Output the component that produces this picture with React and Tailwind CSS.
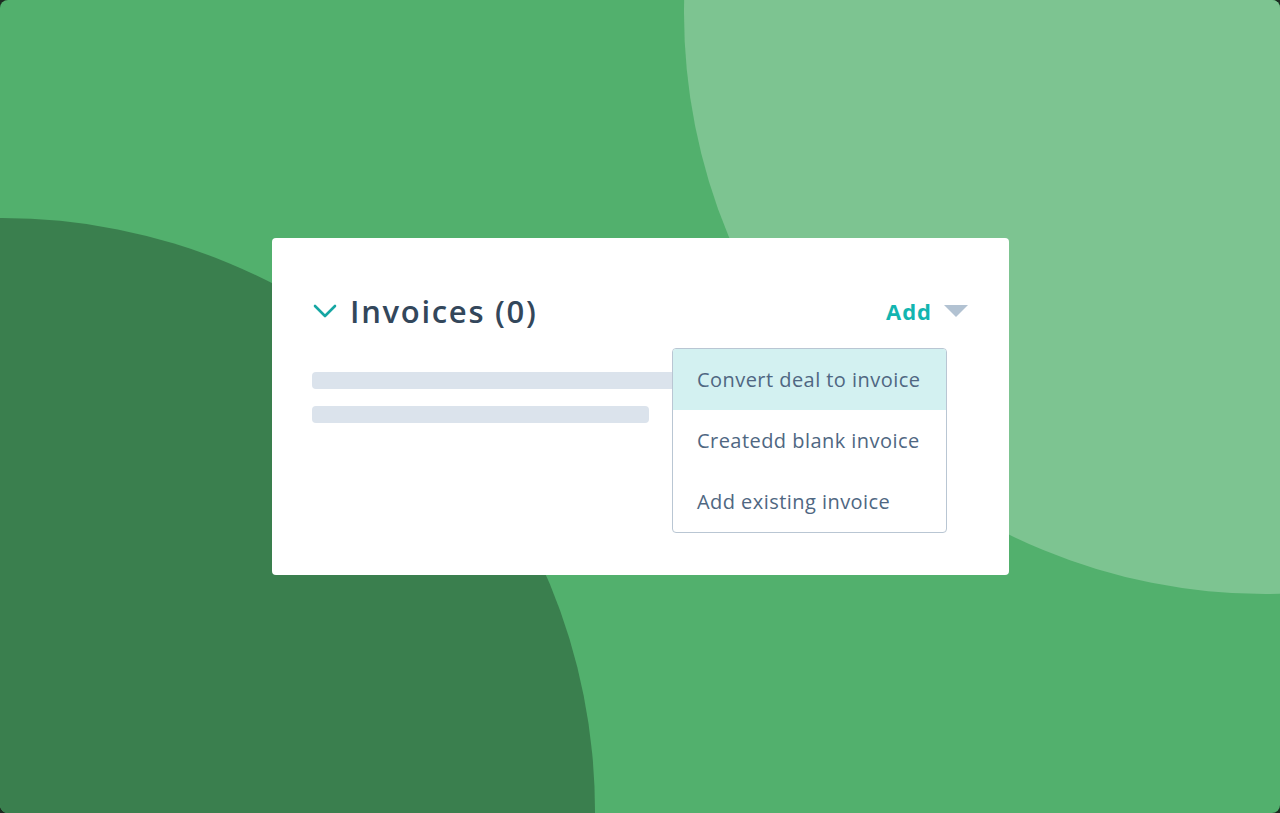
export default function App() {
  const font = { fontFamily: '"Open Sans", "Noto Sans", sans-serif' };
  return (
    <div className="w-[1280px] h-[813px] bg-[#1d2b22]" style={font}>
      <div className="relative w-full h-full overflow-hidden rounded-[8px] bg-[#52b06d]">
        <div className="absolute left-[684px] top-[-568px] w-[1162px] h-[1162px] rounded-full bg-[#7dc491]" />
        <div className="absolute left-[-591px] top-[218px] w-[1186px] h-[1186px] rounded-full bg-[#3a7f4e]" />
        <div className="absolute left-[272px] top-[238px] w-[737px] h-[337px] bg-white rounded-[4px] px-10 pt-[55px]">
          <div className="flex items-center justify-between h-[36px]">
            <div className="flex items-center">
              <svg width="26" height="16" viewBox="0 0 26 16" className="ml-[1px]">
                <path d="M2 3 L12 13 L22 3" fill="none" stroke="#16a6a3" strokeWidth="2.6" strokeLinecap="round" strokeLinejoin="round" />
              </svg>
              <span className="ml-[11px] text-[31px] leading-[36px] font-semibold tracking-[1.7px] text-[#33475b]">Invoices (0)</span>
            </div>
            <div className="flex items-center mr-[1px]">
              <span className="text-[22px] leading-[30px] font-bold tracking-[1px] text-[#12b5b0]">Add</span>
              <svg width="24" height="13" viewBox="0 0 24 13" className="ml-[12px]">
                <path d="M0 0 L24 0 L12 12 Z" fill="#b2c2d2" />
              </svg>
            </div>
          </div>
          <div className="mt-[43px] flex flex-col gap-[17px]">
            <div className="h-[17px] w-[380px] rounded-[4px] bg-[#dbe3ec]" />
            <div className="h-[17px] w-[337px] rounded-[4px] bg-[#dbe3ec]" />
          </div>
          <div className="absolute left-[400px] top-[110px] w-[275px] h-[185px] bg-white border border-[#b9c6d3] rounded-[4px] overflow-hidden flex flex-col text-[20px] tracking-[0.45px] text-[#4f6782]">
            <div className="h-[61px] bg-[#d3f1f1] flex items-center pl-[24px]">Convert deal to invoice</div>
            <div className="h-[61px] flex items-center pl-[24px]">Createdd blank invoice</div>
            <div className="h-[61px] flex items-center pl-[24px]">Add existing invoice</div>
          </div>
        </div>
      </div>
    </div>
  );
}
